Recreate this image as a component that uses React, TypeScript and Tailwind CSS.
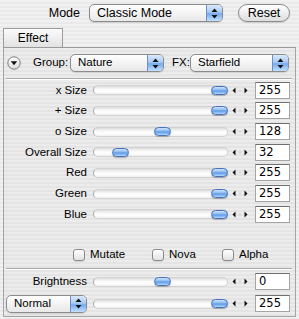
import React from "react";

const sliders = [
  { label: "x Size", value: 255, pos: 1 },
  { label: "+ Size", value: 255, pos: 1 },
  { label: "o Size", value: 128, pos: 128 / 255 },
  { label: "Overall Size", value: 32, pos: 0.14 },
  { label: "Red", value: 255, pos: 1 },
  { label: "Green", value: 255, pos: 1 },
  { label: "Blue", value: 255, pos: 1 },
];

function UpDown() {
  return (
    <svg width="7" height="11" viewBox="0 0 7 11">
      <path d="M3.5 0.5 L6.5 4 L0.5 4 Z" fill="#111" />
      <path d="M3.5 10.5 L6.5 7 L0.5 7 Z" fill="#111" />
    </svg>
  );
}

function Popup({ label, className }: { label: string; className: string }) {
  return (
    <div
      className={`flex h-[18px] items-stretch overflow-hidden rounded-[5px] border border-[#8c8c8c] bg-linear-to-b from-white to-[#e8e8e8] shadow-[0_1px_1px_rgba(0,0,0,0.12)] ${className}`}
    >
      <span className="flex flex-1 items-center pl-[7px] leading-none">{label}</span>
      <span className="flex w-[16px] items-center justify-center border-l border-[#6f8fc4] bg-[linear-gradient(#dbeafd,#a9caf4_45%,#76aaee_55%,#c2e0ff)]">
        <UpDown />
      </span>
    </div>
  );
}

function Slider({ pos }: { pos: number }) {
  // knob travels across 115px of the track
  const left = 3 + pos * 115;
  return (
    <div className="relative h-[10px] w-[135px]">
      <div className="absolute inset-0 rounded-full border border-[#d2d2d2] border-l-[#a9a9a9] bg-[linear-gradient(#dcdcdc,#f6f6f6_35%,#ffffff_65%,#efefef)]" />
      <div
        className="absolute top-[0.5px] h-[9px] w-[17px] rounded-full border border-[#4573bb] bg-[linear-gradient(#cfe3fb,#8ab8f0_45%,#5b97e6_55%,#b3d8ff)] shadow-[0_1px_1px_rgba(0,0,0,0.25)]"
        style={{ left }}
      />
    </div>
  );
}

function Stepper() {
  return (
    <svg width="16" height="7" viewBox="0 0 16 7" className="ml-[4px]">
      <path d="M3.5 0.5 L0.5 3.5 L3.5 6.5 Z" fill="#111" />
      <rect x="7.5" y="2" width="1" height="3" fill="#d0d0d0" />
      <path d="M12.5 0.5 L15.5 3.5 L12.5 6.5 Z" fill="#111" />
    </svg>
  );
}

function NumBox({ value }: { value: number }) {
  return (
    <div className="ml-[7px] flex h-[17px] w-[35px] items-center border border-[#a4a4a4] border-t-[#6e6e6e] bg-white pl-[3px] font-['DejaVu_Sans',sans-serif] text-[11.5px] leading-none text-black">
      {value}
    </div>
  );
}

function Check({ label }: { label: string }) {
  return (
    <div className="flex items-center">
      <span className="h-[12px] w-[12px] rounded-[3px] border border-[#8a8a8a] bg-linear-to-b from-white to-[#e2e2e2] shadow-[0_1px_1px_rgba(0,0,0,0.1)]" />
      <span className="ml-[5px]">{label}</span>
    </div>
  );
}

function Divider() {
  return <div className="ml-[2px] h-[2px] w-[286px] border-t border-[#a9a9a9] border-b border-b-white" />;
}

export default function App() {
  return (
    <div className="h-[319px] w-[299px] overflow-hidden bg-[repeating-linear-gradient(#f1f1f1_0_2px,#e9e9e9_2px_4px)] font-['Liberation_Sans',sans-serif] text-[11.5px] text-black">
      <div className="flex h-[26px] items-center text-[12.5px]">
        <span className="w-[80px] text-right">Mode</span>
        <Popup label="Classic Mode" className="ml-[9px] w-[134px]" />
        <button className="ml-[15px] h-[18px] w-[52px] rounded-full border border-[#8a8a8a] bg-linear-to-b from-white to-[#dedede] text-[12.5px] leading-none shadow-[0_1px_1px_rgba(0,0,0,0.12)]">
          Reset
        </button>
      </div>
      <div className="ml-[3px] mt-[2px] flex h-[19px] w-[60px] items-center justify-center border border-b-0 border-[#9c9c9c] bg-linear-to-b from-[#fbfbfb] to-[#e2e2e2] text-[12px]">
        Effect
      </div>
      <div className="mx-[3px] flex h-[270px] w-[293px] flex-col border border-[#a4a4a4] border-t-[#9a9a9a] bg-black/[0.02]">
        <div className="flex h-[30px] items-center">
          <svg width="14" height="14" viewBox="0 0 14 14" className="ml-[3px]">
            <defs>
              <linearGradient id="disc" x1="0" y1="0" x2="0" y2="1">
                <stop offset="0" stopColor="#ffffff" />
                <stop offset="1" stopColor="#dcdcdc" />
              </linearGradient>
            </defs>
            <circle cx="7" cy="7" r="6.2" fill="url(#disc)" stroke="#7a7a7a" />
            <path d="M3.8 5.2 L10.2 5.2 L7 9.2 Z" fill="#111" />
          </svg>
          <span className="ml-[12px] w-[36px]">Group:</span>
          <Popup label="Nature" className="ml-[1px] w-[94px]" />
          <span className="ml-[8px] w-[17px]">FX:</span>
          <Popup label="Starfield" className="ml-[1px] w-[99px]" />
        </div>
        <Divider />
        <div className="flex flex-col">
          {sliders.map((s) => (
            <div key={s.label} className="flex h-[20.67px] items-center">
              <span className="w-[83px] text-right">{s.label}</span>
              <div className="ml-[6px]">
                <Slider pos={s.pos} />
              </div>
              <Stepper />
              <NumBox value={s.value} />
            </div>
          ))}
        </div>
        <div className="mt-[20px] flex h-[20px] items-center">
          <div className="ml-[69px] w-[79px]">
            <Check label="Mutate" />
          </div>
          <div className="w-[70px]">
            <Check label="Nova" />
          </div>
          <Check label="Alpha" />
        </div>
        <div className="mt-[3px]">
          <Divider />
        </div>
        <div className="mt-[1px] flex h-[22px] items-center">
          <span className="w-[83px] text-right">Brightness</span>
          <div className="ml-[6px]">
            <Slider pos={0.5} />
          </div>
          <Stepper />
          <NumBox value={0} />
        </div>
        <div className="flex h-[22px] items-center">
          <Popup label="Normal" className="ml-[2px] w-[81px]" />
          <div className="ml-[6px]">
            <Slider pos={1} />
          </div>
          <Stepper />
          <NumBox value={255} />
        </div>
      </div>
    </div>
  );
}
